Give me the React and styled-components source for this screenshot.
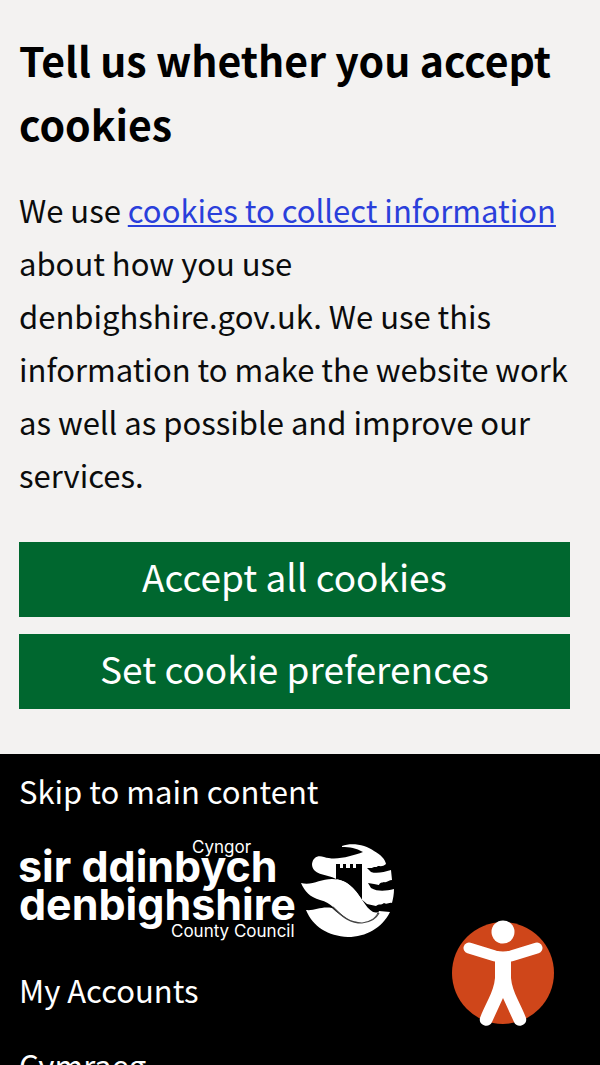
import React from "react";
import styled, { createGlobalStyle } from "styled-components";

const GlobalStyle = createGlobalStyle`
  * {
    box-sizing: border-box;
  }

  body {
    margin: 0;
    background: #000;
    font-family: "Noto Sans CJK SC", "Noto Sans", sans-serif;
    font-size: 31px;
    line-height: 53px;
  }
`;

const Page = styled.div`
  position: relative;
  height: 100vh;
  overflow: hidden;
`;

const CookieBanner = styled.section`
  padding: 27px 30px 45px 19px;
  background: #f3f2f1;
  color: #0b0c0c;
`;

const BannerTitle = styled.h2`
  margin: 0 0 28px;
  font-size: 41px;
  line-height: 64px;
  font-weight: 700;
  color: #000;
`;

const BannerText = styled.p`
  margin: 0 0 41px;
`;

const TextLink = styled.a`
  color: #2a3fdb;
  text-decoration: underline;
  text-decoration-thickness: 2px;
  text-underline-offset: 2px;
`;

const ButtonGroup = styled.div`
  display: flex;
  flex-direction: column;
  gap: 17px;
`;

const BannerButton = styled.button`
  width: 100%;
  height: 75px;
  padding: 0 0 8px;
  border: none;
  background: #00672f;
  color: #fff;
  font-family: inherit;
  font-size: 37px;
  cursor: pointer;
`;

const Header = styled.header`
  display: flex;
  flex-direction: column;
  align-items: flex-start;
  padding: 10px 19px 0;
`;

const HeaderLink = styled.a`
  color: #fff;
  text-decoration: none;
`;

const LogoLink = styled.a`
  display: block;
  margin: 21px 0;
  line-height: 0;
`;

const HeaderNav = styled.nav`
  display: flex;
  flex-direction: column;
  gap: 22px;
`;

const AccessibilityButton = styled.button`
  position: absolute;
  right: 45px;
  bottom: 39px;
  padding: 0;
  border: none;
  background: none;
  line-height: 0;
  cursor: pointer;
`;

const Logo = () => (
  <svg
    width="376"
    height="104"
    viewBox="0 0 376 104"
    fill="#fff"
    fontFamily="Inter, sans-serif"
    role="img"
    aria-label="Denbighshire County Council"
  >
    <text x="173" y="15" fontSize="17">
      Cyngor
    </text>
    <text x="-1" y="44" fontSize="43" fontWeight="700">
      sir ddinbych
    </text>
    <text x="0" y="82" fontSize="43" fontWeight="700">
      denbighshire
    </text>
    <text x="152" y="99" fontSize="17">
      County Council
    </text>
    {/* dragon's head and castle */}
    <g transform="translate(271 -8)">
      <path d="M52 16 C62 12 76 15 84 21 C91 25 95 29 96 34 C93 37 90 36 88 36 C86 38 84 36 82 38 L77 38 L81 42 C87 44 94 42 101 40 L102 50 C99 50 97 53 94 52 C92 53 90 52 89 55 L84 54 L78 53 L81 58 C88 62 96 61 104 59 C104 64 103 69 102 73 C99 72 97 75 94 73 C91 76 89 73 86 76 L77 74 L70 68 L46 49 L44 48 C36 44 22 45 22 34 C23 27 28 25 34 27 C46 31 62 26 73 22 C66 18 60 17 52 17 Z" />
      <path
        d="M46 34 H50 V38 H53 V34 H56 V38 H60 V34 H63 V38 H66 V34 H72 V70 C64 57 57 51 46 49 Z"
        fill="#000"
      />
      {/* waves */}
      <path d="M11 53 C22 56 30 49 42 49 C60 49 68 64 75 74 C79 80 84 84 88 82 C83 94 67 95 56 88 C45 80 42 73 30 70 C20 67 15 62 11 53 Z" />
      <path d="M16 80 C25 81 31 76 42 78 C52 87 60 92 71 92 C81 92 87 87 89 81 L100 82 C92 98 76 107 58 107 C38 106 23 97 16 80 Z" />
      <path
        d="M43 77 C53 88 61 93 72 93 C81 92 86 89 89 83"
        fill="none"
        stroke="#444"
        strokeWidth="1.2"
      />
    </g>
  </svg>
);

const AccessibilityIcon = () => (
  <svg width="104" height="108" viewBox="0 0 104 108" aria-hidden="true">
    <circle cx="52" cy="55" r="51" fill="#cf461a" />
    <circle cx="52" cy="14" r="11.5" fill="#fff" />
    <path
      d="M18 30 L44 38 Q52 40 60 38 L86 30"
      fill="none"
      stroke="#fff"
      strokeWidth="11"
      strokeLinecap="round"
      strokeLinejoin="round"
    />
    <path
      d="M44 38 H60 V60 C61 74 71 88 75 100 C77 107 66 111 63 104 L52 80 L41 104 C38 111 27 107 29 100 C33 88 43 74 44 60 Z"
      fill="#fff"
    />
  </svg>
);

const App = () => {
  return (
    <>
      <GlobalStyle />
      <Page>
        <CookieBanner aria-label="Cookies">
          <BannerTitle>Tell us whether you accept cookies</BannerTitle>
          <BannerText>
            We use <TextLink href="#cookies">cookies to collect information</TextLink>{" "}
            about how you use denbighshire.gov.uk. We use this information to
            make the website work as well as possible and improve our services.
          </BannerText>
          <ButtonGroup>
            <BannerButton type="button">Accept all cookies</BannerButton>
            <BannerButton type="button">Set cookie preferences</BannerButton>
          </ButtonGroup>
        </CookieBanner>
        <Header>
          <HeaderLink href="#main">Skip to main content</HeaderLink>
          <LogoLink href="#home">
            <Logo />
          </LogoLink>
          <HeaderNav>
            <HeaderLink href="#accounts">My Accounts</HeaderLink>
            <HeaderLink href="#cymraeg">Cymraeg</HeaderLink>
          </HeaderNav>
        </Header>
        <AccessibilityButton type="button" aria-label="Accessibility options">
          <AccessibilityIcon />
        </AccessibilityButton>
      </Page>
    </>
  );
};

export default App;
